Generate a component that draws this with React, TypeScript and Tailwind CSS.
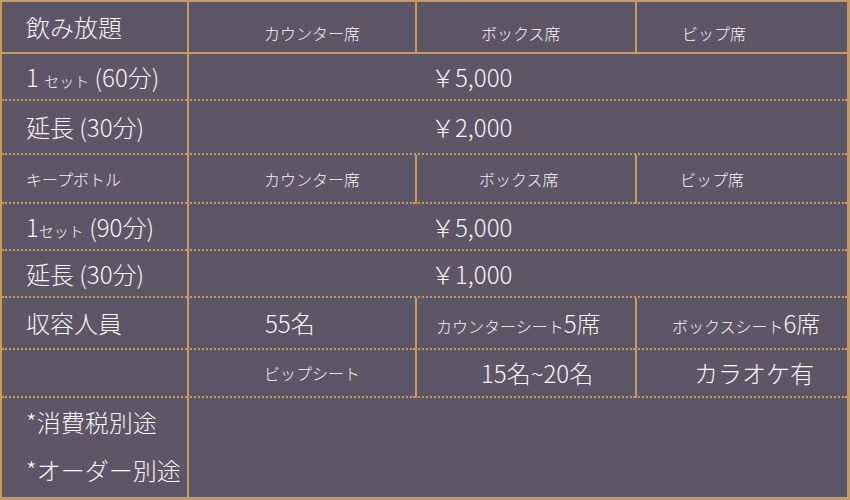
import type { ReactNode } from "react";

// Gold rules on a muted plum background, price list for a bar.
const DOT = "[border-bottom:2px_dotted_#c79b5b]";

function Row({ h, children }: { h: string; children: ReactNode }) {
  return <div className={`flex ${h}`}>{children}</div>;
}

function Cell({
  className,
  children,
}: {
  className: string;
  children?: ReactNode;
}) {
  return <div className={`flex items-center ${className}`}>{children}</div>;
}

export default function App() {
  return (
    <div className="flex h-[500px] w-[850px] flex-col border-t-2 border-r-[3px] border-b-[3px] border-l-2 border-[#c79b5b] bg-[#5c5667] font-['Noto_Sans_CJK_JP',sans-serif] font-light leading-none text-[#f6f4f7]">
      {/* 飲み放題 header */}
      <Row h="h-[52px]">
        <Cell className="w-[185px] border-b-2 border-[#c79b5b] pl-[24px] text-[24px]">
          飲み放題
        </Cell>
        <Cell className="w-[228px] border-b-2 border-l-2 border-[#c79b5b] pt-[12px] pl-[75px] text-[16px]">
          カウンター席
        </Cell>
        <Cell className="w-[220px] border-b-2 border-l-2 border-[#c79b5b] pt-[12px] pl-[64px] text-[16px]">
          ボックス席
        </Cell>
        <Cell className="flex-1 border-b-2 border-l-2 border-[#c79b5b] pt-[12px] pl-[45px] text-[16px]">
          ビップ席
        </Cell>
      </Row>

      <Row h="h-[47px]">
        <Cell className={`w-[185px] ${DOT} pl-[24px] text-[24px]`}>
          <span>
            1 <span className="text-[15px]">セット</span> (60分)
          </span>
        </Cell>
        <Cell className={`flex-1 border-l-2 border-[#c79b5b] ${DOT} pl-[242px] text-[24px]`}>
          ￥5,000
        </Cell>
      </Row>

      <Row h="h-[54px]">
        <Cell className={`w-[185px] ${DOT} pl-[24px] text-[24px]`}>延長 (30分)</Cell>
        <Cell className={`flex-1 border-l-2 border-[#c79b5b] ${DOT} pl-[242px] text-[24px]`}>
          ￥2,000
        </Cell>
      </Row>

      {/* キープボトル header */}
      <Row h="h-[49px]">
        <Cell className={`w-[185px] ${DOT} pl-[24px] text-[16px]`}>キープボトル</Cell>
        <Cell className={`w-[228px] border-l-2 border-[#c79b5b] ${DOT} pl-[75px] text-[16px]`}>
          カウンター席
        </Cell>
        <Cell className={`w-[220px] border-l-2 border-[#c79b5b] ${DOT} pl-[62px] text-[16px]`}>
          ボックス席
        </Cell>
        <Cell className={`flex-1 border-l-2 border-[#c79b5b] ${DOT} pl-[43px] text-[16px]`}>
          ビップ席
        </Cell>
      </Row>

      <Row h="h-[47px]">
        <Cell className={`w-[185px] ${DOT} pl-[24px] text-[24px]`}>
          <span>
            1<span className="text-[15px]">セット</span> (90分)
          </span>
        </Cell>
        <Cell className={`flex-1 border-l-2 border-[#c79b5b] ${DOT} pl-[242px] text-[24px]`}>
          ￥5,000
        </Cell>
      </Row>

      <Row h="h-[47px]">
        <Cell className={`w-[185px] ${DOT} pl-[24px] text-[24px]`}>延長 (30分)</Cell>
        <Cell className={`flex-1 border-l-2 border-[#c79b5b] ${DOT} pl-[242px] text-[24px]`}>
          ￥1,000
        </Cell>
      </Row>

      {/* 収容人員 */}
      <Row h="h-[52px]">
        <Cell className={`w-[185px] ${DOT} pl-[24px] text-[24px]`}>収容人員</Cell>
        <Cell className={`w-[228px] border-l-2 border-[#c79b5b] ${DOT} pl-[76px] text-[24px]`}>
          55名
        </Cell>
        <Cell className={`w-[220px] border-l-2 border-[#c79b5b] ${DOT} pl-[19px] text-[24px]`}>
          <span>
            <span className="text-[16px]">カウンターシート</span>5席
          </span>
        </Cell>
        <Cell className={`flex-1 border-l-2 border-[#c79b5b] ${DOT} pl-[35px] text-[24px]`}>
          <span>
            <span className="text-[16px]">ボックスシート</span>6席
          </span>
        </Cell>
      </Row>

      <Row h="h-[48px]">
        <Cell className={`w-[185px] ${DOT}`} />
        <Cell className={`w-[228px] border-l-2 border-[#c79b5b] ${DOT} pl-[75px] text-[16px]`}>
          ビップシート
        </Cell>
        <Cell className={`w-[220px] border-l-2 border-[#c79b5b] ${DOT} pl-[64px] text-[24px]`}>
          15名~20名
        </Cell>
        <Cell className={`flex-1 border-l-2 border-[#c79b5b] ${DOT} pl-[57px] text-[24px]`}>
          カラオケ有
        </Cell>
      </Row>

      {/* notes */}
      <div className="flex flex-1">
        <div className="w-[185px] pl-[24px] text-[24px] leading-[48px]">
          <p>*消費税別途</p>
          <p>*オーダー別途</p>
        </div>
        <div className="flex-1 border-l-2 border-[#c79b5b]" />
      </div>
    </div>
  );
}
